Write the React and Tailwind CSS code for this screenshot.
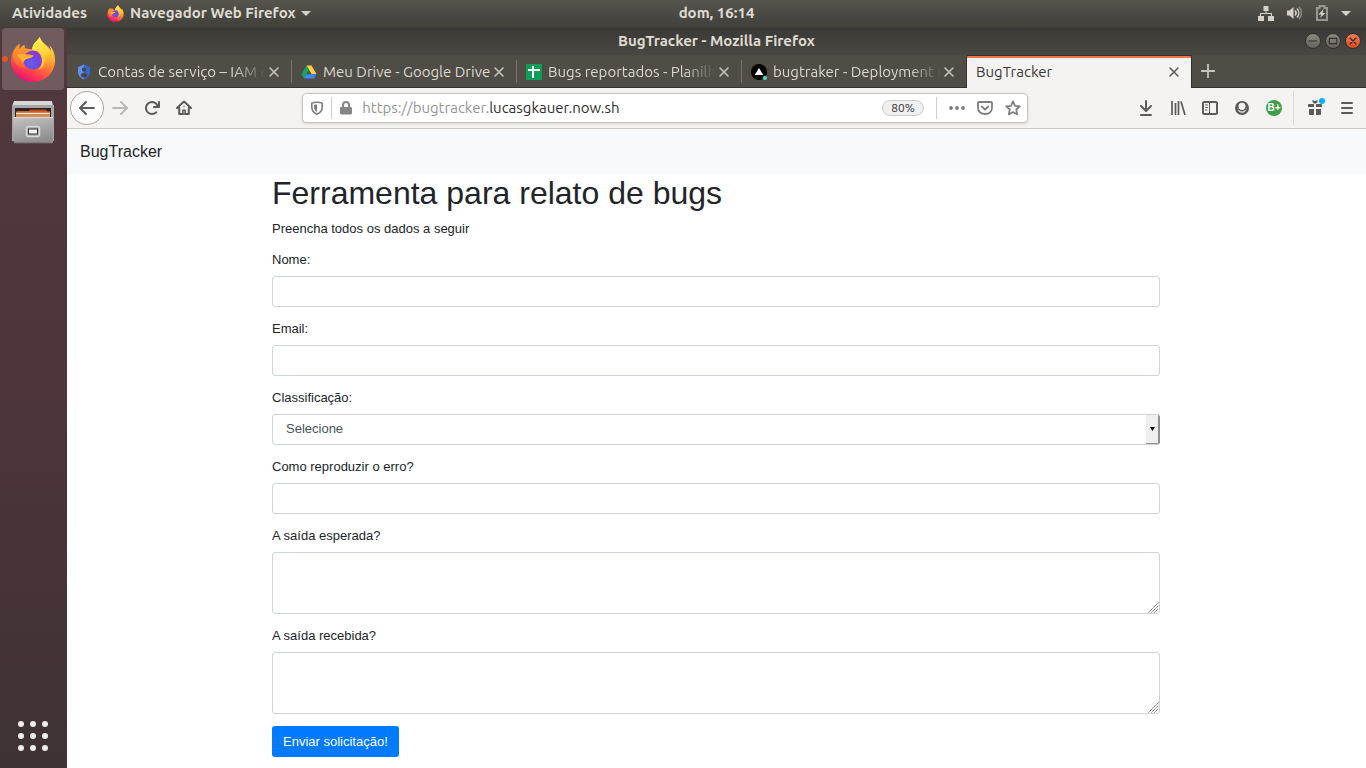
import React from "react";

const ui = "font-['Ubuntu','Noto_Sans',sans-serif]";

function FirefoxLogo({ id, className }) {
  const u = (name) => `url(#${id}-${name})`;
  return (
    <svg viewBox="0 0 48 48" className={className} aria-hidden="true">
      <defs>
        <linearGradient id={`${id}-body`} x1="0.8" y1="0.1" x2="0.35" y2="1">
          <stop offset="0" stopColor="#ffe14a" />
          <stop offset="0.3" stopColor="#ffb02e" />
          <stop offset="0.55" stopColor="#ff7139" />
          <stop offset="0.8" stopColor="#ff3750" />
          <stop offset="1" stopColor="#e5127a" />
        </linearGradient>
        <linearGradient id={`${id}-tail`} x1="0.3" y1="0" x2="0.6" y2="1">
          <stop offset="0" stopColor="#fff44f" />
          <stop offset="0.55" stopColor="#ffd53a" />
          <stop offset="1" stopColor="#ff8a2b" stopOpacity="0.1" />
        </linearGradient>
        <radialGradient id={`${id}-globe`} cx="0.4" cy="0.7" r="0.75">
          <stop offset="0" stopColor="#5f5fe8" />
          <stop offset="0.6" stopColor="#7542e5" />
          <stop offset="1" stopColor="#a030d4" />
        </radialGradient>
        <linearGradient id={`${id}-head`} x1="0.5" y1="0" x2="0.4" y2="1">
          <stop offset="0" stopColor="#ffa02c" />
          <stop offset="0.6" stopColor="#ff8030" />
          <stop offset="1" stopColor="#ff5a42" />
        </linearGradient>
      </defs>
      <path
        fill={u("body")}
        d="M31 1c-1 3-7 6-8 13l-7-1c-1-1-1-3-1-4-2 1-4 3-5 5-1-2 0-4 0-6C5 12 1 18 1 26c0 12 10 22 23 22s23-10 23-23c0-7-3-13-6-15 1 2 2 4 2 6C40 9 33 8 31 1z"
      />
      <path
        fill={u("tail")}
        d="M31 1c-1 3-8 6-8 14 4 0 8 1 10 5 3 6 1 12-4 16 9-1 14-7 14-14C43 13 34 10 31 1z"
      />
      <circle cx="24" cy="25" r="10" fill={u("globe")} />
      <path fill="#ffc933" d="M28 16c6 1 9 6 8 11-.5 4-3 7-6 8 3-4 4-8 3-12-.7-3-2.500-5.500-5-7z" />
      <path
        fill={u("head")}
        d="M10 8c0 2-1 4 0 6 1-2 3-4 5-5 0 1 0 3 1 4 2 0 4 1 5 2-2 1-4 2-5 4 2 0 5 0 8 1-1 3-5 3-7 4-2 1-3 2-3 4 0 2 1 4 3 6C9 33 4 29 3 22c0-6 3-11 7-14z"
      />
      <path fill="#ffb22c" d="M7 20c4-2 8-1 11 0 2 0 5 0 6.500 0-1 3-6 3-7.500 4s-3 3-4 4c-1-4-4-6-6-8z" />
    </svg>
  );
}

function Ico({ children, className = "h-4 w-4", color = "text-[#5b5b5b]" }) {
  return (
    <svg viewBox="0 0 16 16" className={`shrink-0 ${className} ${color}`} fill="none" stroke="currentColor" strokeWidth="2" strokeLinecap="round" strokeLinejoin="round" aria-hidden="true">
      {children}
    </svg>
  );
}

function IconButton({ label, children }) {
  return (
    <button type="button" aria-label={label} className="flex shrink-0 items-center justify-center">
      {children}
    </button>
  );
}

const Arrow = () => (
  <path stroke="none" fill="currentColor" d="M15 7H3.414l4.293-4.293a1 1 0 0 0-1.414-1.414l-6 6a1 1 0 0 0 0 1.414l6 6a1 1 0 0 0 1.414-1.414L3.414 9H15a1 1 0 0 0 0-2z" />
);

const Shield = () => (
  <>
    <path strokeWidth="1.600" d="M8 2.200c-2 0-4 .3-5.200.9V7c0 3.500 2 5.900 5.200 7.200 3.200-1.300 5.200-3.700 5.200-7.200V3.100C12 2.500 10 2.200 8 2.200z" />
    <path stroke="none" fill="currentColor" d="M8 4.500c-1.200 0-2.200.1-3 .4V7c0 2.200 1.100 3.900 3 4.900z" />
  </>
);

const favicons = {
  iam: (
    <svg viewBox="0 0 16 16" className="h-4 w-4 shrink-0" aria-hidden="true">
      <path fill="#5f90ee" d="M8 .5 2 3v5c0 3.500 2.500 6.400 6 7.500z" />
      <path fill="#3367d6" d="M8 .5 14 3v5c0 3.500-2.500 6.400-6 7.500z" />
      <circle cx="8" cy="5.700" r="2.100" fill="#474540" />
      <path fill="#474540" d="M4.800 12c0-2.200 1.200-3.300 3.200-3.300s3.200 1.100 3.200 3.300L8 14z" />
    </svg>
  ),
  drive: (
    <svg viewBox="0 0 16 16" className="h-4 w-4 shrink-0" aria-hidden="true">
      <path fill="#ffcf48" d="M5.500 1.500h5l5 8.600h-5z" />
      <path fill="#11a861" d="M5.500 1.500 8 5.800l-5 8.700L.5 10.200z" />
      <path fill="#4285f4" d="M5.500 10.200h10L13 14.500H3z" />
    </svg>
  ),
  sheets: (
    <svg viewBox="0 0 16 16" className="h-4 w-4 shrink-0" aria-hidden="true">
      <rect width="16" height="16" rx="1" fill="#0f9d58" />
      <path fill="#fff" d="M6 2h2v3h6v2H8v7H6V7H2V5h4z" />
    </svg>
  ),
  zeit: (
    <svg viewBox="0 0 16 16" className="h-4 w-4 shrink-0" aria-hidden="true">
      <circle cx="8" cy="8" r="8" fill="#000" />
      <path fill="#fff" d="m8 4 4.300 7H3.700z" />
      <circle cx="14" cy="14" r="2.600" fill="#4a4740" />
      <circle cx="14" cy="14" r="2" fill="#50e3c2" />
    </svg>
  ),
};

const tabs = [
  { title: "Contas de serviço – IAM e", icon: "iam", line: true, fade: true },
  { title: "Meu Drive - Google Drive", icon: "drive", line: true },
  { title: "Bugs reportados - Planilh", icon: "sheets", line: true, fade: true },
  { title: "bugtraker - Deployment O", icon: "zeit", fade: true },
  { title: "BugTracker", active: true },
];

function Tab({ title, icon, active, line, fade }) {
  return (
    <div
      className={`flex min-w-0 basis-[225px] items-stretch border-t ${
        active ? "border-r border-[#33322e] bg-[#f4f3f2] text-[#3a3935] shadow-[inset_0_2px_0_#f0764a]" : "border-b border-t-transparent border-b-[#33322e] text-[#dcd8cf]"
      }`}
    >
      <div className="flex min-w-0 flex-1 items-center pr-[9px] pl-[9px]">
        <button type="button" className="flex min-w-0 flex-1 items-center gap-[6px] text-left">
          {icon && favicons[icon]}
          <span
            className={`min-w-0 flex-1 overflow-hidden text-[15px] leading-5 whitespace-nowrap ${
              fade ? "[mask-image:linear-gradient(to_left,transparent,black_32px)]" : ""
            }`}
          >
            {title}
          </span>
        </button>
        <IconButton label={`Fechar ${title}`}>
          <Ico color={active ? "text-[#5b5b5b]" : "text-[#c6c3bb]"}>
            <path strokeWidth="1.600" d="m4 4 8 8M12 4l-8 8" />
          </Ico>
        </IconButton>
      </div>
      {line && <span className="my-1 w-px bg-[#77746b]" />}
      {!line && !active && <span className="w-px bg-[#33322e]" />}
    </div>
  );
}

function Caret() {
  return (
    <svg viewBox="0 0 10 5" className="-ml-px h-[5px] w-[10px]" aria-hidden="true">
      <path fill="#d5d1c8" d="M0 0h10L5 5z" />
    </svg>
  );
}

function TopBar() {
  return (
    <header className="grid h-7 shrink-0 grid-cols-[67px_1fr_auto_1fr] items-center bg-linear-to-b from-[#57544c] to-[#403f3a] pb-[2px] text-[15px] leading-5 font-bold text-[#dfdbd2]">
      <div className="col-span-2 flex items-center pl-3 whitespace-nowrap">
        <button type="button">Atividades</button>
        <button type="button" className="ml-5 flex items-center gap-[6px]">
          <FirefoxLogo id="small" className="h-[17px] w-[17px]" />
          Navegador Web Firefox
          <Caret />
        </button>
      </div>
      <button type="button">dom, 16:14</button>
      <div className="flex items-center justify-end gap-3 pr-[15px] text-[#d5d1c8]">
        <svg viewBox="0 0 16 16" className="h-4 w-4" fill="currentColor" aria-hidden="true">
          <path d="M5.500 1h5v5H8.500v2H14v3h2v5h-6v-5h3V9H3v2h3v5H0v-5h2V8h5.500V6h-2z" />
        </svg>
        <svg viewBox="0 0 16 16" className="h-4 w-4" fill="currentColor" aria-hidden="true">
          <path d="M1 5.500h2.500L7.500 2v12L3.500 10.500H1z" />
          <path fill="none" stroke="currentColor" strokeWidth="1.500" d="M9 5.500c1.300 1.400 1.300 3.600 0 5M11 3.500c2.400 2.600 2.400 6.400 0 9" />
          <path fill="none" stroke="#8a877f" strokeWidth="1.500" d="M13 1.800c3.200 3.600 3.200 8.800 0 12.400" />
        </svg>
        <svg viewBox="0 0 16 16" className="h-4 w-4" aria-hidden="true">
          <path fill="none" stroke="#99968e" strokeWidth="2" d="M3 3h2.500V1h5v2H13v12H3z" />
          <path fill="#d5d1c8" d="M9.500 4 4.500 9.500h3L6 13l5.500-5h-3z" />
        </svg>
        <Caret />
      </div>
    </header>
  );
}

function Dock() {
  return (
    <aside className="flex w-[67px] shrink-0 flex-col items-center bg-linear-to-b from-[#50383c] via-[#4d3539] to-[#3e3235] pr-px">
      <div className="relative">
        <button type="button" aria-label="Firefox" className="flex h-[62px] w-[62px] items-center justify-center rounded-[4px] bg-[#715b5e]">
          <FirefoxLogo id="large" className="h-[46px] w-[46px]" />
        </button>
        <span className="absolute top-7 left-0 h-[6px] w-[6px] rounded-full bg-[#e95420]" />
      </div>
      <button type="button" aria-label="Arquivos" className="mt-[9px]">
        <svg viewBox="0 0 44 46" className="h-[46px] w-[44px]" aria-hidden="true">
          <defs>
            <linearGradient id="cab" x1="0" y1="0" x2="0.3" y2="1">
              <stop offset="0" stopColor="#c4c4c4" />
              <stop offset="1" stopColor="#8f8f8f" />
            </linearGradient>
          </defs>
          <path fill="#d8d8d8" d="M3 2h38l1 5H1z" />
          <path fill="#a6a6a6" d="M1 6h42v36H1z" />
          <rect x="4" y="9" width="36" height="11" fill="#2a2424" />
          <path fill="#b8441a" d="M6 12h12l1-1.500h16l1 1.500v3H6z" />
          <rect x="5" y="12.500" width="34" height="2.500" fill="#e07a38" />
          <rect x="5" y="14" width="34" height="1.500" fill="#f8ecde" />
          <rect x="5" y="15.500" width="34" height="3" fill="#dc8f4c" />
          <path fill="url(#cab)" d="M2 18h40v26H3z" />
          <path stroke="#d8d8d8" d="M2 18.500h40" />
          <rect x="15.500" y="27.500" width="13" height="10" rx="2" fill="#aaa" stroke="#d8d8d8" strokeWidth="1.500" />
          <rect x="17.500" y="30" width="9" height="5" fill="#f3f3f3" stroke="#333" />
          <path stroke="#666" d="M3 44h38" />
        </svg>
      </button>
      <button type="button" aria-label="Mostrar aplicativos" className="mt-auto mb-[17px] grid grid-cols-3 gap-[6px]">
        {Array.from({ length: 9 }, (_, i) => (
          <span key={i} className="h-[6px] w-[6px] rounded-full bg-[#f0eeed]" />
        ))}
      </button>
    </aside>
  );
}

function TitleBar() {
  const round = "flex h-4 w-4 items-center justify-center rounded-full border border-[#34332f]";
  return (
    <div className="grid h-[27px] grid-cols-[1fr_auto_1fr] items-center bg-linear-to-b from-[#3a3935] to-[#4a4842] pb-[2px]">
      <p className="col-start-2 text-[15px] leading-5 font-bold text-[#dfdbd2]">BugTracker - Mozilla Firefox</p>
      <div className="flex justify-end gap-1 pr-[5px]">
        <button type="button" aria-label="Minimizar" className={`${round} bg-linear-to-b from-[#8b8880] to-[#65625b]`}>
          <Ico className="h-3 w-3" color="text-[#33322e]"><path strokeWidth="1.500" d="M3 8h10" /></Ico>
        </button>
        <button type="button" aria-label="Maximizar" className={`${round} bg-linear-to-b from-[#8b8880] to-[#65625b]`}>
          <Ico className="h-3 w-3" color="text-[#33322e]"><path strokeWidth="1.500" d="M3 4.500h10v7H3z" /></Ico>
        </button>
        <button type="button" aria-label="Fechar" className={`${round} bg-linear-to-b from-[#f47c55] to-[#df4a1c]`}>
          <Ico className="h-3 w-3" color="text-[#33322e]"><path strokeWidth="1.700" d="m4 4 8 8M12 4l-8 8" /></Ico>
        </button>
      </div>
    </div>
  );
}

function Toolbar() {
  return (
    <div className="flex h-[41px] items-center border-b border-[#c9c6c3] bg-[#f4f3f2] pr-[11px] pl-[3px]">
      <button type="button" aria-label="Voltar" className="flex h-[34px] w-[34px] shrink-0 items-center justify-center rounded-full border border-[#aaa8a5] bg-[#fcfcfc]">
        <Ico><Arrow /></Ico>
      </button>
      <div className="ml-2 flex items-center gap-4">
        <IconButton label="Avançar"><Ico className="h-4 w-4 rotate-180" color="text-[#bab9b7]"><Arrow /></Ico></IconButton>
        <IconButton label="Recarregar">
          <Ico><path stroke="none" fill="currentColor" d="M15 1a1 1 0 0 0-1 1v2.418A6.995 6.995 0 1 0 8 15a6.954 6.954 0 0 0 4.950-2.050 1 1 0 0 0-1.414-1.414A5.019 5.019 0 1 1 12.549 6H10a1 1 0 0 0 0 2h5a1 1 0 0 0 1-1V2a1 1 0 0 0-1-1z" /></Ico>
        </IconButton>
        <IconButton label="Início">
          <Ico><path d="M1 8l7-6.500L15 8M3.200 7.500V14H6.500M12.800 7.500V14H9.500" /><path strokeWidth="1.500" d="M6.800 14v-3.700h2.400V14z" /><path strokeWidth="1" d="M8 6v1" /></Ico>
        </IconButton>
      </div>
      <div className="flex-[11]" />
      <div className="flex h-[30px] min-w-0 flex-[71] items-center rounded-[4px] border border-[#c6c4c1] bg-white pr-[6px] pl-[6px] shadow-sm">
        <IconButton label="Proteção"><Ico color="text-[#7d7d7d]"><Shield /></Ico></IconButton>
        <span className="mx-[6px] h-[22px] w-px shrink-0 bg-[#cfcfcf]" />
        <IconButton label="Conexão segura">
          <Ico color="text-[#858585]"><rect x="2.500" y="7.500" width="11" height="6.500" rx="0.500" fill="currentColor" strokeWidth="1" /><path d="M5 7V5a3 3 0 0 1 6 0v2" /></Ico>
        </IconButton>
        <div role="textbox" aria-label="Endereço" contentEditable suppressContentEditableWarning spellCheck={false} className="ml-2 min-w-0 flex-1 overflow-hidden text-[15px] leading-5 whitespace-nowrap text-[#2e2e2e] outline-none">
          <span className="text-[#959595]">https://bugtracker.</span>lucasgkauer.now.sh
        </div>
        <button type="button" className="h-4 shrink-0 rounded-full border border-[#cbcbcb] bg-[#f0f0f0] px-2 text-[12px] leading-[14px] text-[#333]">80%</button>
        <span className="mr-3 ml-3 h-[22px] w-px shrink-0 bg-[#cfcfcf]" />
        <div className="flex gap-3">
          <IconButton label="Ações da página"><Ico color="text-[#7d7d7d]"><g stroke="none" fill="currentColor"><circle cx="2" cy="8" r="1.900" /><circle cx="8" cy="8" r="1.900" /><circle cx="14" cy="8" r="1.900" /></g></Ico></IconButton>
          <IconButton label="Salvar no Pocket"><Ico color="text-[#7d7d7d]"><path strokeWidth="1.800" d="M2 2h12c.6 0 1 .4 1 1v4.500C15 11.500 12 14 8 14s-7-2.500-7-6.500V3c0-.6.4-1 1-1zM4.800 6.500 8 9.500l3.200-3" /></Ico></IconButton>
          <IconButton label="Favoritar"><Ico color="text-[#7d7d7d]"><path strokeWidth="1.700" d="m8 1.300 2 4.500 4.800.5-3.600 3.200 1 4.900L8 12l-4.200 2.400 1-4.900L1.200 6.300 6 5.800z" /></Ico></IconButton>
        </div>
      </div>
      <div className="flex-[11]" />
      <div className="flex items-center gap-4">
        <IconButton label="Downloads"><Ico><path d="M8 1v9M3 6l5 5 5-5M3 15h10" /></Ico></IconButton>
        <IconButton label="Biblioteca"><Ico><path strokeLinecap="butt" strokeWidth="1.700" d="M2 1v14M5.500 3v12M8.500 1v14M11 1.500 15 15" /></Ico></IconButton>
        <IconButton label="Barra lateral"><Ico><rect x="1" y="2" width="14" height="12" rx="1.500" /><path strokeWidth="1" d="M7.500 2v12M3.500 5h2M3.500 7.500h2M3.500 10h1.500" /></Ico></IconButton>
        <IconButton label="Conta">
          <Ico>
            <circle cx="8" cy="8" r="7" stroke="none" fill="currentColor" />
            <path stroke="none" fill="#f4f3f2" d="M8 2.800a3.500 3.500 0 0 1 3.500 3.500c0 1-.3 1.800-.8 2.500h2c-.8 2.500-2.600 3.900-4.700 3.900s-3.900-1.400-4.700-3.900h2c-.5-.7-.8-1.500-.8-2.500A3.500 3.500 0 0 1 8 2.800z" />
            <path stroke="none" fill="currentColor" d="M3 8.800h2.300a3.500 3.500 0 0 0 5.400 0H13l-.6 1.400H11a4.500 4.500 0 0 1-6 0H3.500z" />
          </Ico>
        </IconButton>
        <button type="button" aria-label="Extensão B+" className="flex h-4 w-4 items-center justify-center rounded-full bg-[#3f9e45] font-['Liberation_Sans',sans-serif] text-[10px] leading-none font-bold text-white">B+</button>
      </div>
      <span className="mr-[13px] ml-[11px] h-[34px] w-px bg-[#dddbd9]" />
      <div className="flex items-center gap-4">
        <div className="relative flex">
          <IconButton label="Novidades">
            <Ico><g stroke="none" fill="currentColor"><path d="M2 4h5v3H1V5c0-.6.4-1 1-1zM9 4h5c.6 0 1 .4 1 1v2H9zM2 9h5v6H3c-.6 0-1-.4-1-1zM9 9h5v5c0 .6-.4 1-1 1H9z" /><path d="M5.500 0 8 1l2.500-1v2L9 3.500H7L5.500 2z" /></g></Ico>
          </IconButton>
          <span className="absolute -top-[2px] left-3 h-[6px] w-[6px] rounded-full bg-[#00b3f4]" />
        </div>
        <IconButton label="Menu"><Ico><path d="M3 3h10M3 8h10M3 13h10" /></Ico></IconButton>
      </div>
    </div>
  );
}

const field = "block w-full rounded-[3px] border border-[#ced4da] bg-white px-[13px] text-[13px] leading-[19px] text-[#495057] outline-none focus:border-[#80bdff]";

function Field({ id, label, children }) {
  return (
    <div>
      <label htmlFor={id} className="mb-[7px] block">{label}</label>
      {children}
    </div>
  );
}

function TextArea({ id }) {
  return (
    <div className="relative">
      <textarea id={id} className={`${field} h-[62px] resize-none py-[5px]`} />
      <svg viewBox="0 0 11 11" className="pointer-events-none absolute right-px bottom-px h-[11px] w-[11px]" stroke="#555" strokeDasharray="1.400 0.500" aria-hidden="true">
        <path d="M0.500 10.500l10-10M3.500 10.500l7-7M6.500 10.500l4-4" />
      </svg>
    </div>
  );
}

function Page() {
  return (
    <div className="flex-1 bg-white font-['Liberation_Sans',sans-serif] text-[13px] leading-[19px] text-[#212529]">
      <nav className="flex h-[45px] items-center bg-[#f8f9fb] px-[13px]">
        <a href="#" className="text-[16px] leading-6">BugTracker</a>
      </nav>
      <main className="mx-auto max-w-[913px] pr-[13px] pl-3">
        <h1 className="mb-[7px] text-[32px] leading-[38px]">Ferramenta para relato de bugs</h1>
        <p className="mb-3">Preencha todos os dados a seguir</p>
        <form onSubmit={(e) => e.preventDefault()} className="flex flex-col gap-3">
          <Field id="nome" label="Nome:"><input id="nome" type="text" className={`${field} h-[31px]`} /></Field>
          <Field id="email" label="Email:"><input id="email" type="email" className={`${field} h-[31px]`} /></Field>
          <Field id="tipo" label="Classificação:">
            <div className="relative">
              <select id="tipo" className={`${field} h-[31px] appearance-none pb-[2px]`}>
                <option>Selecione</option>
              </select>
              <span className="pointer-events-none absolute top-px right-0 bottom-px flex w-[14px] items-center justify-center rounded-r-[2px] border-r-2 border-b border-[#8f8f8f] bg-[#f0efee]">
                <svg viewBox="0 0 5 4" className="h-1 w-[5px]" aria-hidden="true"><path d="M0 0h5L2.500 4z" /></svg>
              </span>
            </div>
          </Field>
          <Field id="passos" label="Como reproduzir o erro?"><input id="passos" type="text" className={`${field} h-[31px]`} /></Field>
          <Field id="esperada" label="A saída esperada?"><TextArea id="esperada" /></Field>
          <Field id="recebida" label="A saída recebida?"><TextArea id="recebida" /></Field>
          <button type="submit" className="h-[31px] self-start rounded-[3px] bg-[#007bff] px-[11px] text-white">Enviar solicitação!</button>
        </form>
      </main>
    </div>
  );
}

export default function App() {
  return (
    <div className={`flex min-h-screen flex-col ${ui}`}>
      <TopBar />
      <div className="flex flex-1">
        <Dock />
        <div className="flex min-w-0 flex-1 flex-col">
          <TitleBar />
          <div className="flex h-[33px] bg-[#504d46]">
            {tabs.map((tab) => <Tab key={tab.title} {...tab} />)}
            <div className="flex flex-1 items-center border-b border-[#33322e] pl-2">
              <IconButton label="Nova aba">
                <Ico color="text-[#c6c3bb]"><path strokeLinecap="butt" strokeWidth="1.800" d="M8 1v14M1 8h14" /></Ico>
              </IconButton>
            </div>
          </div>
          <Toolbar />
          <Page />
        </div>
      </div>
    </div>
  );
}
